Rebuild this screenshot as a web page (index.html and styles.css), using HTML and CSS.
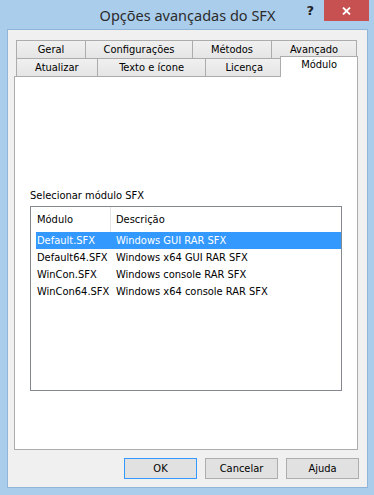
FILE: index.html
```html
<!DOCTYPE html>
<html lang="pt">
<head>
<meta charset="utf-8">
<title>Opções avançadas do SFX</title>
<link rel="stylesheet" href="styles.css">
</head>
<body>
<div class="window">
  <div class="titlebar">
    <div></div>
    <div class="title">Opções avançadas do SFX</div>
    <div class="caption-btns">
      <span class="help">?</span>
      <span class="close"><svg width="9" height="8" viewBox="0 0 9 8"><path d="M1 0.5 L8 7.5 M8 0.5 L1 7.5" stroke="#fff" stroke-width="1.8" fill="none"/></svg></span>
    </div>
  </div>
  <div class="client">
    <div class="tabctl">
      <div class="tabrow">
        <div class="tab w-geral">Geral</div>
        <div class="tab w-config">Configurações</div>
        <div class="tab w-metodos">Métodos</div>
        <div class="tab w-avancado">Avançado</div>
      </div>
      <div class="tabrow">
        <div class="tab w-atualizar">Atualizar</div>
        <div class="tab w-texto">Texto e ícone</div>
        <div class="tab w-licenca">Licença</div>
        <div class="tab selected w-modulo">Módulo</div>
      </div>
      <div class="panel">
        <div class="label">Selecionar módulo SFX</div>
        <div class="listview">
          <div class="lv-header">
            <div class="hcol hcol1">Módulo</div>
            <div class="hcol hcol2">Descrição</div>
          </div>
          <div class="lv-row sel"><span>Default.SFX</span><span>Windows GUI RAR SFX</span></div>
          <div class="lv-row"><span>Default64.SFX</span><span>Windows x64 GUI RAR SFX</span></div>
          <div class="lv-row"><span>WinCon.SFX</span><span>Windows console RAR SFX</span></div>
          <div class="lv-row"><span>WinCon64.SFX</span><span>Windows x64 console RAR SFX</span></div>
        </div>
      </div>
    </div>
    <div class="buttons">
      <button class="btn default">OK</button>
      <button class="btn">Cancelar</button>
      <button class="btn">Ajuda</button>
    </div>
  </div>
</div>
</body>
</html>
```
FILE: styles.css
```css
* { box-sizing: border-box; }
html, body { margin: 0; padding: 0; }
body {
  width: 374px;
  height: 495px;
  overflow: hidden;
  background: #aacdec;
}
.window {
  width: 374px;
  height: 495px;
  background: #aacdec;
  padding: 0 6px 7px 7px;
  display: flex;
  flex-direction: column;
}
.titlebar {
  height: 29px;
  display: grid;
  grid-template-columns: 1fr auto 1fr;
  align-items: start;
}
.title {
  font-family: "Noto Sans", "Open Sans", sans-serif;
  font-size: 14.5px;
  color: #2b2b2b;
  line-height: 30px;
  white-space: nowrap;
}
.caption-btns {
  justify-self: end;
  display: flex;
  align-items: flex-start;
  margin-right: -1px;
}
.help {
  font-family: "DejaVu Sans", sans-serif;
  font-weight: bold;
  font-size: 13px;
  color: #222;
  line-height: 21px;
  margin-right: 10px;
}
.close {
  width: 45px;
  height: 21px;
  background: #c75050;
  display: flex;
  align-items: center;
  justify-content: center;
}
.client {
  flex: 1;
  background: #f0f0f0;
  border: 1px solid #8fb5d8;
  padding: 10px 8px 0 6px;
  display: flex;
  flex-direction: column;
  font-family: "DejaVu Sans Condensed", "DejaVu Sans", sans-serif;
  font-size: 11px;
  color: #000;
}
.tabctl {
  width: 344px;
}
.tabrow {
  display: flex;
  padding-left: 2px;
  height: 18px;
}
.tab {
  height: 18px;
  border: 1px solid #acacac;
  border-bottom: none;
  background: linear-gradient(#f0f0f0, #e5e5e5);
  text-align: center;
  line-height: 17px;
  white-space: nowrap;
  margin-left: -1px;
}
.tab:first-child { margin-left: 0; }
.w-geral { width: 70px; }
.w-config { width: 108px; }
.w-metodos { width: 80px; }
.w-avancado { width: 86px; }
.w-atualizar { width: 82px; }
.w-texto { width: 110px; }
.w-licenca { width: 78px; }
.tab.selected {
  width: 78px;
  height: 21px;
  margin-top: -2px;
  margin-left: -3px;
  background: #fff;
  position: relative;
  z-index: 1;
  line-height: 16px;
}
.panel {
  height: 374px;
  border: 1px solid #acacac;
  background: #fff;
  padding: 112px 0 0 15px;
}
.label {
  line-height: 14px;
  height: 14px;
  margin-bottom: 3px;
}
.listview {
  width: 312px;
  height: 185px;
  border: 1px solid #828790;
  background: #fff;
}
.lv-header {
  display: grid;
  grid-template-columns: 80px 1fr;
  height: 25px;
  line-height: 25px;
  background: linear-gradient(90deg, #fff 0, #fff 60%, #f6f8fb 100%);
}
.hcol1 {
  padding-left: 6px;
  border-right: 1px solid #e5e5e5;
  background: #fff;
}
.hcol2 {
  padding-left: 5px;
  background: #fff;
}
.lv-row {
  display: grid;
  grid-template-columns: 79px 1fr;
  height: 17px;
  line-height: 17px;
  margin-left: 5px;
  white-space: nowrap;
}
.lv-row span { padding-left: 1px; }
.lv-row.sel {
  background: #3399ff;
  color: #fff;
}
.buttons {
  display: flex;
  justify-content: flex-end;
  gap: 8px;
  margin-top: 8px;
}
.btn {
  width: 73px;
  height: 21px;
  padding: 0;
  border: 1px solid #adadad;
  background: #e1e1e1;
  font-family: "DejaVu Sans Condensed", "DejaVu Sans", sans-serif;
  font-size: 11px;
  color: #000;
  line-height: 19px;
}
.btn.default {
  border-color: #3399ff;
}
```
